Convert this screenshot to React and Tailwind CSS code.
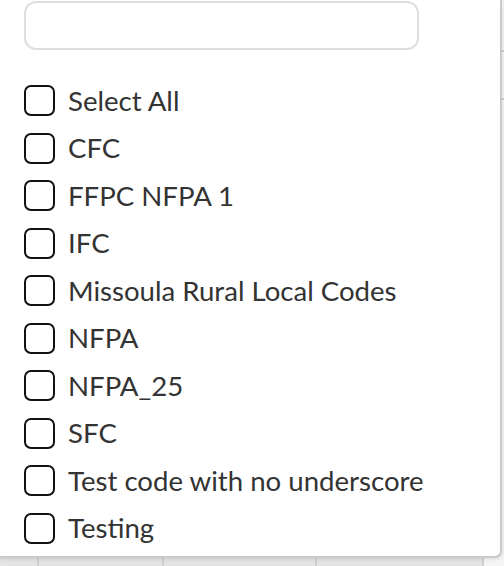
import { useState } from 'react'

const codes = [
  'CFC',
  'FFPC NFPA 1',
  'IFC',
  'Missoula Rural Local Codes',
  'NFPA',
  'NFPA_25',
  'SFC',
  'Test code with no underscore',
  'Testing',
]

function CheckRow({ label, checked, onToggle }) {
  return (
    <label className="flex h-[47.5px] cursor-pointer items-center gap-[13px]">
      <span
        onClick={onToggle}
        className={`block h-[31px] w-[31px] shrink-0 rounded-[7px] border-[2.5px] border-[#111] ${
          checked ? 'bg-[#111]' : 'bg-white'
        }`}
      />
      <span className="text-[27.6px] leading-none text-[#333]">{label}</span>
    </label>
  )
}

export default function App() {
  const [query, setQuery] = useState('')
  const [selected, setSelected] = useState({})

  const allChecked = codes.every((c) => selected[c])
  const toggle = (c) => setSelected((s) => ({ ...s, [c]: !s[c] }))
  const toggleAll = () => {
    const next = {}
    codes.forEach((c) => (next[c] = !allChecked))
    setSelected(next)
  }

  return (
    <div
      className="relative h-[566px] w-[504px] overflow-hidden bg-[#e4e4e4]"
      style={{ fontFamily: 'Lato, "Open Sans", sans-serif' }}
    >
      {/* table behind the popup */}
      <div className="absolute inset-0 flex">
        <div className="w-[39px] border-r-2 border-[#cfcfcf]" />
        <div className="w-[125px] border-r-2 border-[#cfcfcf]" />
        <div className="w-[153px] border-r-2 border-[#cfcfcf]" />
        <div className="w-[167px] border-r-2 border-[#cfcfcf]" />
        <div className="flex-1 bg-[#f5f5f5]">
          <div className="h-[52px] border-b-2 border-[#c8c8c8]" />
          <div className="h-[48px] border-b-2 border-[#c8c8c8]" />
        </div>
      </div>

      {/* dropdown panel */}
      <div className="absolute left-0 top-0 h-[558px] w-[502px] rounded-br-[7px] border-b-2 border-r-2 border-[#cacaca] bg-white pl-[24px] shadow-[0_1px_4px_rgba(0,0,0,0.12)]">
        <input
          value={query}
          onChange={(e) => setQuery(e.target.value)}
          className="mt-px block h-[49px] w-[395px] rounded-[12px] border-2 border-[#dedede] bg-white px-3 text-[24px] outline-none"
        />
        <div className="mt-[27px]">
          <CheckRow label="Select All" checked={allChecked} onToggle={toggleAll} />
          {codes
            .filter((c) => c.toLowerCase().includes(query.toLowerCase()))
            .map((c) => (
              <CheckRow key={c} label={c} checked={!!selected[c]} onToggle={() => toggle(c)} />
            ))}
        </div>
      </div>
    </div>
  )
}
